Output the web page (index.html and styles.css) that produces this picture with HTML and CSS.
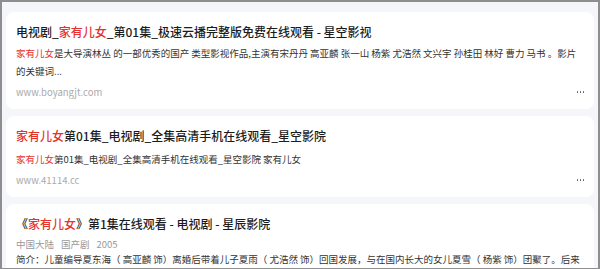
FILE: index.html
```html
<!DOCTYPE html>
<html>
<head>
    <meta charset="UTF-8">
    <title>家有儿女 - 搜索结果</title>
    <link rel="stylesheet" href="styles.css">
</head>
<body>
    <div id="frame">
        <div class="tab-line"></div>

        <div class="result">
            <h3 class="result-title">电视剧_<em>家有儿女</em>_第01集_极速云播完整版免费在线观看 - 星空影视</h3>
            <p class="result-desc"><em>家有儿女</em>是大导演林丛 的一部优秀的国产 类型影视作品,主演有宋丹丹 高亚麟 张一山 杨紫 尤浩然 文兴宇 孙桂田 林好 曹力 马书 。影片的关键词...</p>
            <div class="result-foot">
                <span class="result-url">www.boyangjt.com</span>
                <span class="more"><i></i><i></i><i></i></span>
            </div>
        </div>

        <div class="result">
            <h3 class="result-title"><em>家有儿女</em>第01集_电视剧_全集高清手机在线观看_星空影院</h3>
            <p class="result-desc single"><em>家有儿女</em>第01集_电视剧_全集高清手机在线观看_星空影院 家有儿女</p>
            <div class="result-foot">
                <span class="result-url">www.41114.cc</span>
                <span class="more"><i></i><i></i><i></i></span>
            </div>
        </div>

        <div class="result">
            <h3 class="result-title">《<em>家有儿女</em>》第1集在线观看 - 电视剧 - 星辰影院</h3>
            <p class="result-meta"><span>中国大陆</span><span>国产剧</span><span>2005</span></p>
            <p class="result-intro">简介：儿童编导夏东海（ 高亚麟 饰）离婚后带着儿子夏雨（ 尤浩然 饰）回国发展，与在国内长大的女儿夏雪（ 杨紫 饰）团聚了。后来夏东海与离异的刘梅结婚</p>
        </div>
    </div>
</body>
</html>
```

FILE: styles.css
```css
body {
  margin: 0;
  font-family: "Noto Sans CJK SC", "Noto Sans", sans-serif;
}

#frame {
  width: 600px;
  height: 269px;
  box-sizing: border-box;
  border: 2px solid #8e8e8e;
  border-bottom-width: 1px;
  background-color: #f5f6fa;
  padding: 3px 4px 0 4px;
  overflow: hidden;
  display: flex;
  flex-direction: column;
  gap: 7px;
}

.tab-line {
  width: 21px;
  height: 1px;
  margin-left: 6px;
  background-color: #d3e2f0;
}

.result {
  background-color: #fff;
  border-radius: 8px;
  padding: 11px 10px 8px 10px;
  flex-shrink: 0;
}

.result em {
  font-style: normal;
  color: #e5302b;
}

.result-title {
  margin: 0;
  font-size: 12px;
  line-height: 18px;
  font-weight: 500;
  color: #1c1c1c;
  white-space: nowrap;
}

.result-desc {
  margin: 3px 0 0 0;
  font-size: 9.5px;
  line-height: 18px;
  color: #333;
}

.result-desc.single {
  margin-top: 5px;
}

.result-foot {
  display: flex;
  justify-content: space-between;
  align-items: center;
  margin-top: 3px;
  height: 18px;
}

.result-url {
  font-size: 9.5px;
  color: #aaa;
}

.more {
  display: flex;
  gap: 1.5px;
}

.more i {
  width: 1.5px;
  height: 1.5px;
  border-radius: 50%;
  background-color: #555;
}

.result-meta {
  display: flex;
  gap: 7px;
  margin: 4px 0 0 0;
  font-size: 9.5px;
  line-height: 14px;
  color: #999;
}

.result-intro {
  margin: 1px 0 0 0;
  font-size: 9.5px;
  line-height: 14px;
  color: #333;
}
```
